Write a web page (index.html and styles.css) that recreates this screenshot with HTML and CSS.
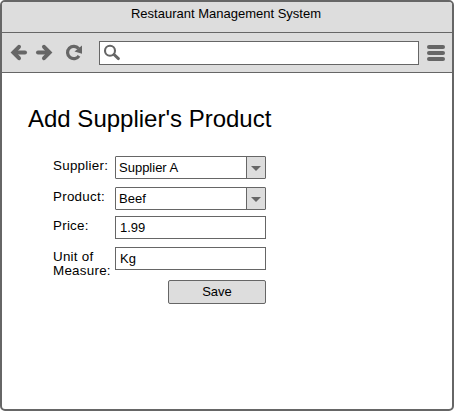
FILE: index.html
```html
<!DOCTYPE html>
<html lang="en">
<head>
<meta charset="utf-8">
<title>Restaurant Management System</title>
<link rel="stylesheet" href="styles.css">
</head>
<body>
<div class="window">
  <header class="titlebar"><span>Restaurant Management System</span></header>
  <nav class="toolbar">
    <svg class="nav-icons" width="97" height="39" viewBox="2 33 97 39" fill="none" stroke="#666" stroke-width="4">
      <path d="M25 52.5H14" stroke-linecap="round"/>
      <path d="M19 46.8L13.4 52.5L19 58.2" stroke-linecap="round"/>
      <path d="M38 52.5H49" stroke-linecap="round"/>
      <path d="M44 46.8L49.6 52.5L44 58.2" stroke-linecap="round"/>
      <path d="M78.6 48.6A6.2 6.2 0 1 0 79 55.8" stroke-width="3.2"/>
      <path d="M82 45.5V53.8L74.5 51.5Z" fill="#666" stroke="none"/>
    </svg>
    <div class="address">
      <svg width="20" height="20" viewBox="102 43 20 20" fill="none" stroke="#666">
        <circle cx="110" cy="50.7" r="5" stroke-width="2.1"/>
        <path d="M114 54.5L118.4 58.6" stroke-width="3" stroke-linecap="round"/>
      </svg>
    </div>
    <div class="menu"><i></i><i></i><i></i></div>
  </nav>
  <main>
    <h1>Add Supplier's Product</h1>
    <form class="form">
      <label>Supplier:</label>
      <div class="field select"><span>Supplier A</span><b><i></i></b></div>
      <label>Product:</label>
      <div class="field select"><span>Beef</span><b><i></i></b></div>
      <label>Price:</label>
      <div class="field"><span>1.99</span></div>
      <label>Unit of<br>Measure:</label>
      <div class="field"><span>Kg</span></div>
      <button type="button">Save</button>
    </form>
  </main>
</div>
</body>
</html>
```
FILE: styles.css
```css
* { box-sizing: border-box; }
body {
  margin: 0;
  background: #fff;
  color: #000;
  font: 13px/15px "Liberation Sans", Arial, sans-serif;
}
.window {
  width: 454px;
  height: 411px;
  border: 2px solid #666;
  border-radius: 5px;
  overflow: hidden;
}
.titlebar {
  height: 31px;
  padding: 4px 2px 0 0;
  background: #ddd;
  border-bottom: 1px solid #666;
  text-align: center;
}
.toolbar {
  display: flex;
  height: 40px;
  background: #ddd;
  border-bottom: 1px solid #666;
}
.nav-icons { display: block; }
.address {
  width: 320px;
  height: 24px;
  margin-top: 8px;
  padding: 1px 2px;
  background: #fff;
  border: 1px solid #666;
}
.address svg { display: block; }
.menu {
  display: flex;
  flex-direction: column;
  gap: 2px;
  margin: 12px 0 0 8px;
}
.menu i {
  width: 18px;
  height: 4px;
  border-radius: 2px;
  background: #666;
}
main { padding: 31px 0 0 26px; }
h1 {
  margin: 0;
  font-size: 24px;
  font-weight: 400;
  line-height: 29px;
  white-space: nowrap;
}
.form {
  display: grid;
  grid-template-columns: 62px 151px;
  grid-template-rows: 31px 29px 31px 33px 24px;
  margin: 23px 0 0 25px;
}
label {
  padding-top: 3px;
  font-size: 13.4px;
  letter-spacing: 0.25px;
  line-height: 14px;
  white-space: nowrap;
}
.field {
  display: flex;
  height: 23px;
  border: 1px solid #666;
  padding: 3px 0 0 4px;
}
.select {
  padding: 0 0 0 3px;
  border-radius: 1px;
  justify-content: space-between;
}
.select span { padding-top: 3px; }
.select b {
  display: flex;
  align-items: center;
  justify-content: center;
  width: 19px;
  background: #ddd;
  border-left: 1px solid #666;
}
.select b i {
  margin-top: 1px;
  border: 5px solid transparent;
  border-top-color: #666;
  border-bottom: 0;
}
button {
  grid-column: 2;
  justify-self: end;
  width: 98px;
  height: 24px;
  padding: 0 0 1px;
  border: 1px solid #666;
  border-radius: 2px;
  background: #ddd;
  color: #000;
  font: inherit;
}
```
